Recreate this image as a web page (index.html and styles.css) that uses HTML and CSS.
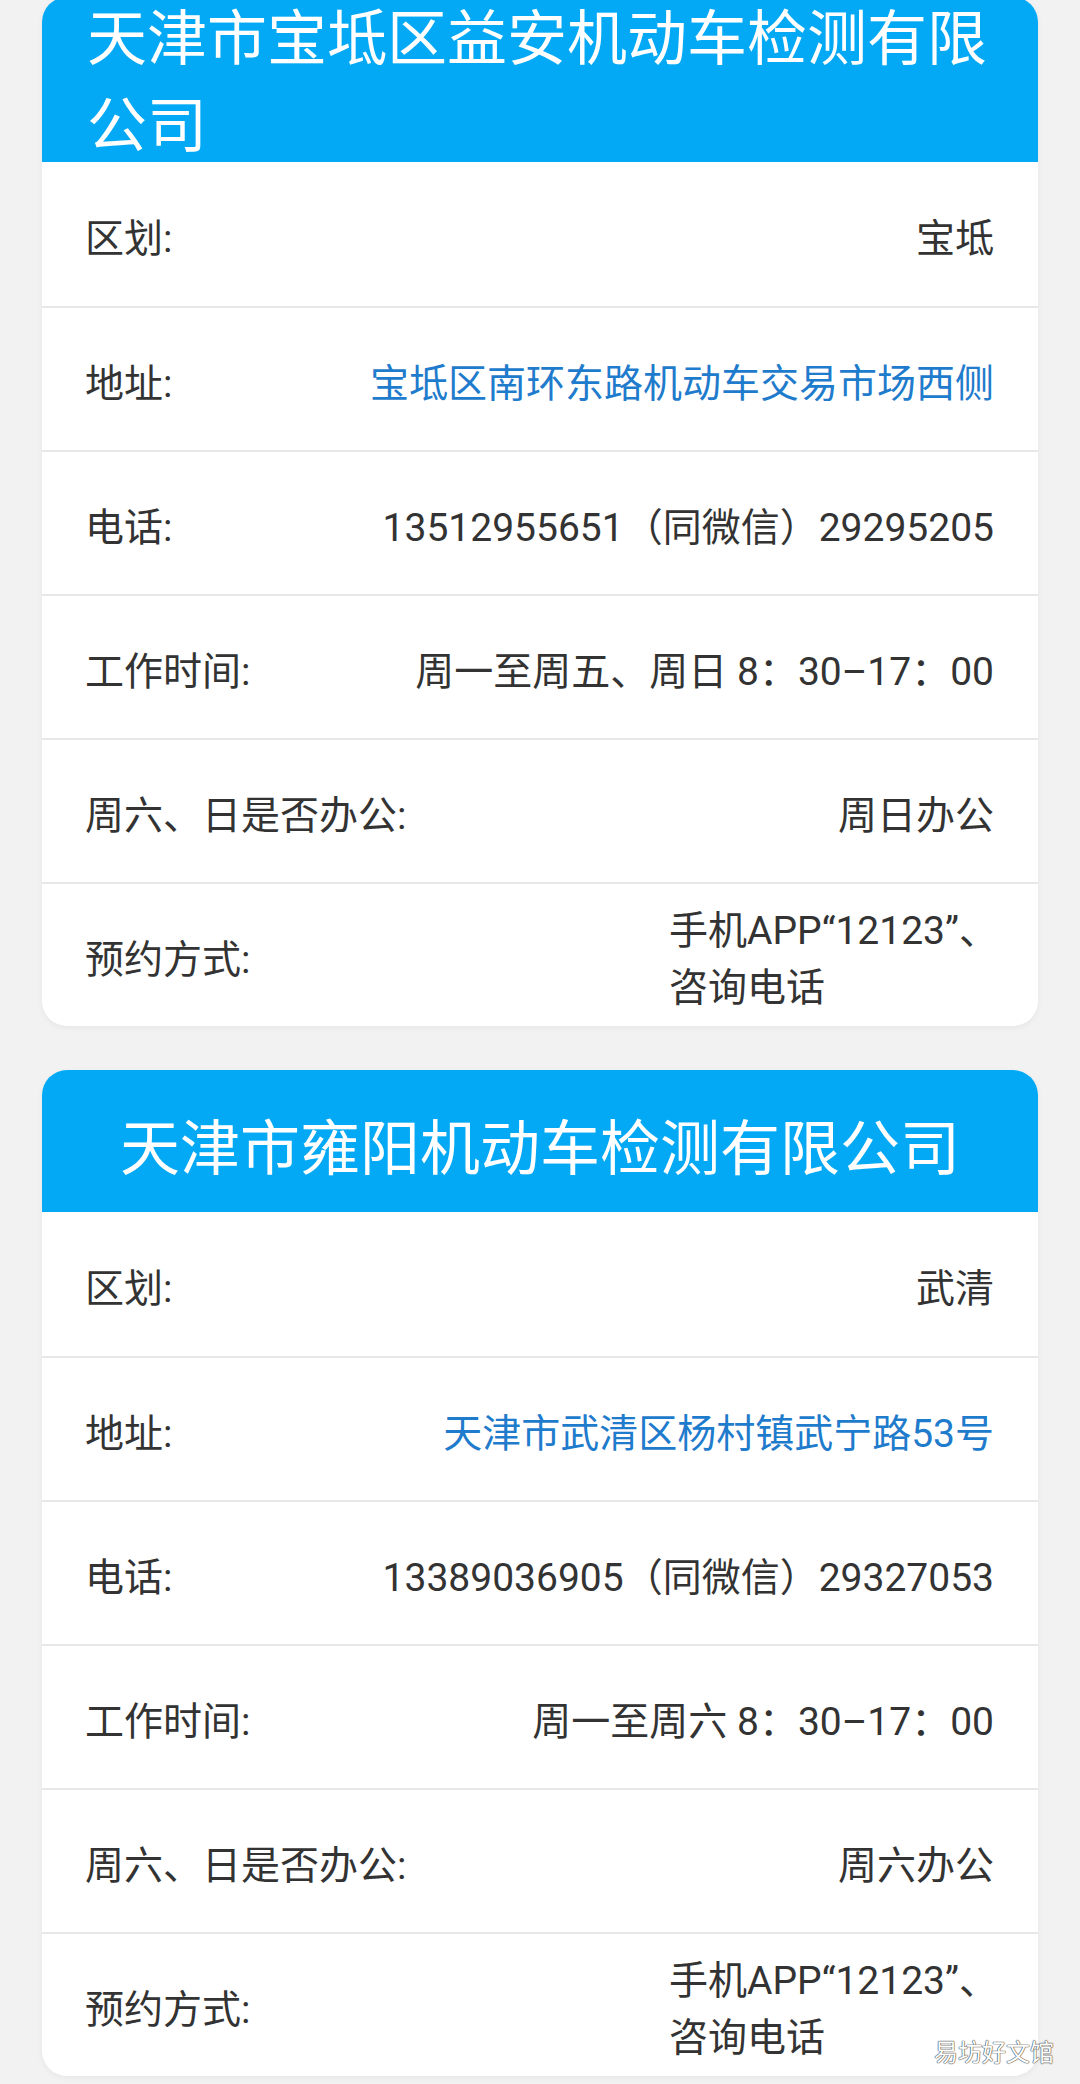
FILE: index.html
```html
<!DOCTYPE html>
<html lang="zh-CN">
<head>
  <meta charset="UTF-8" />
  <meta name="viewport" content="width=device-width, initial-scale=1.0" />
  <title>机动车检测站</title>
  <link rel="stylesheet" href="styles.css">
</head>
<body>
  <div class="page">

    <section class="card card-first">
      <div class="card-head">
        <h2>天津市宝坻区益安机动车检测有限公司</h2>
      </div>
      <div class="row"><span class="label">区划:</span><span class="value">宝坻</span></div>
      <div class="row"><span class="label">地址:</span><span class="value link">宝坻区南环东路机动车交易市场西侧</span></div>
      <div class="row"><span class="label">电话:</span><span class="value">13512955651（同微信）29295205</span></div>
      <div class="row"><span class="label">工作时间:</span><span class="value">周一至周五、周日 8：30–17：00</span></div>
      <div class="row"><span class="label">周六、日是否办公:</span><span class="value">周日办公</span></div>
      <div class="row"><span class="label">预约方式:</span><span class="value narrow">手机APP“12123”、咨询电话</span></div>
    </section>

    <section class="card">
      <div class="card-head centered">
        <h2>天津市雍阳机动车检测有限公司</h2>
      </div>
      <div class="row"><span class="label">区划:</span><span class="value">武清</span></div>
      <div class="row"><span class="label">地址:</span><span class="value link">天津市武清区杨村镇武宁路53号</span></div>
      <div class="row"><span class="label">电话:</span><span class="value">13389036905（同微信）29327053</span></div>
      <div class="row"><span class="label">工作时间:</span><span class="value">周一至周六 8：30–17：00</span></div>
      <div class="row"><span class="label">周六、日是否办公:</span><span class="value">周六办公</span></div>
      <div class="row"><span class="label">预约方式:</span><span class="value narrow">手机APP“12123”、咨询电话</span></div>
    </section>

    <div class="watermark">易坊好文馆</div>
  </div>
</body>
</html>
```

FILE: styles.css
```css
body {
  margin: 0;
  background: #f2f2f2;
  font-family: 'Roboto', 'Noto Sans CJK SC', sans-serif;
  color: #333;
}

.page {
  position: relative;
  padding: 0 42px 8px;
  min-height: 2084px;
  box-sizing: border-box;
}

.card {
  background: #ffffff;
  border-radius: 25px;
  overflow: hidden;
  margin-bottom: 44px;
  box-shadow: 0 2px 6px rgba(0,0,0,0.05);
}

.card-first {
  margin-top: -3px;
}

.card-head {
  display: flow-root;
  background: #03a9f4;
  padding: 0 45px;
}

.card-head h2 {
  margin: -1px 0 -8px;
  font-size: 60px;
  font-weight: 400;
  line-height: 87px;
  color: #ffffff;
}

.card-head.centered {
  padding: 36px 45px 19px;
  text-align: center;
}

.card-head.centered h2 {
  margin: 0;
}

.row {
  display: flex;
  align-items: center;
  justify-content: space-between;
  min-height: 144px;
  box-sizing: border-box;
  padding: 10px 44px 0 43px;
  font-size: 39px;
  line-height: 57px;
}

.row + .row {
  border-top: 2px solid #e8e8e8;
}

.label {
  flex-shrink: 0;
  color: #333;
}

.value {
  text-align: right;
  color: #333;
}

.value.link {
  color: #1f7bcc;
}

.value.narrow {
  width: 345px;
  margin-right: -20px;
  text-align: left;
}

.watermark {
  position: absolute;
  top: 2036px;
  right: 26px;
  font-size: 24px;
  color: #ffffff;
  text-shadow: 0 0 1px #444, 0 0 1px #444, 0 0 1px #444;
}
```
